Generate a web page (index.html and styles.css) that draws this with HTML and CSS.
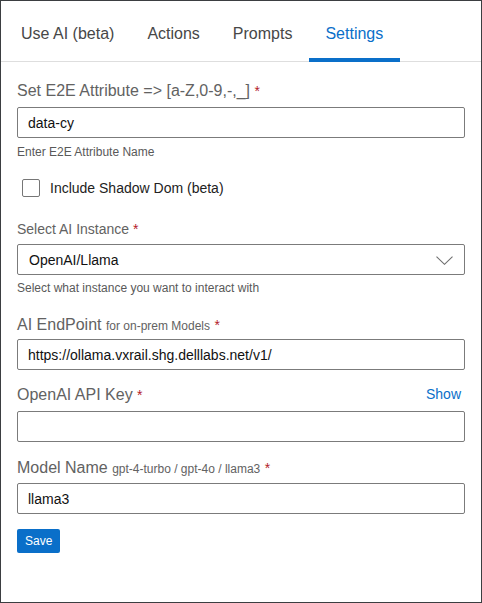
FILE: index.html
```html
<!DOCTYPE html>
<html>
<head>
<meta charset="utf-8">
<link rel="stylesheet" href="styles.css">
</head>
<body>
<div class="frame">
  <nav class="tabs">
    <div class="tab">Use AI (beta)</div>
    <div class="tab">Actions</div>
    <div class="tab">Prompts</div>
    <div class="tab active">Settings</div>
  </nav>
  <form class="content">
    <label class="label lg first">Set E2E Attribute =&gt; [a-Z,0-9,-,_] <span class="req">*</span></label>
    <input class="field" type="text" value="data-cy">
    <div class="help h1">Enter E2E Attribute Name</div>

    <div class="check-row">
      <span class="checkbox"></span>
      <span class="check-text">Include Shadow Dom (beta)</span>
    </div>

    <label class="label sm">Select AI Instance <span class="req">*</span></label>
    <div class="field select">
      <span>OpenAI/Llama</span>
      <svg width="17" height="9" viewBox="0 0 17 9"><polyline points="0.5,0.6 8.5,8.3 16.5,0.6" fill="none" stroke="#6f6f6f" stroke-width="1.1"/></svg>
    </div>
    <div class="help">Select what instance you want to interact with</div>

    <label class="label lg g2">AI EndPoint <span class="sub">for on-prem Models</span> <span class="req">*</span></label>
    <input class="field" type="text" value="https://ollama.vxrail.shg.delllabs.net/v1/">

    <div class="label lg g3 row">
      <label>OpenAI API Key <span class="req">*</span></label>
      <a class="show">Show</a>
    </div>
    <input class="field" type="password" value="">

    <label class="label lg g4">Model Name <span class="sub">gpt-4-turbo / gpt-4o / llama3</span> <span class="req">*</span></label>
    <input class="field" type="text" value="llama3">

    <div class="actions">
      <button type="button" class="btn">Save</button>
    </div>
  </form>
</div>
</body>
</html>
```

FILE: styles.css
```css
* { box-sizing: border-box; }
html, body { margin: 0; padding: 0; background: #fff; }
body { font-family: "Liberation Sans", Arial, sans-serif; }

.frame {
  width: 482px;
  height: 603px;
  border: 1px solid #3b3e41;
  background: #fff;
}

.tabs {
  display: flex;
  padding-left: 3.5px;
  border-bottom: 1px solid #dedede;
  height: 61px;
}
.tab {
  position: relative;
  padding: 22px 16.5px 0;
  font-size: 16px;
  line-height: 21px;
  color: #474747;
}
.tab.active { color: #0a6fc9; }
.tab.active::after {
  content: "";
  position: absolute;
  left: 0;
  right: 0;
  bottom: -1px;
  height: 4px;
  background: #0a6fc9;
}

.content {
  display: flex;
  flex-direction: column;
  padding: 0 16px;
}

.label {
  display: block;
  color: #626262;
  line-height: 20px;
  height: 20px;
}
.label.lg { font-size: 16px; }
.label.first { margin-top: 19px; margin-bottom: 6px; }
.label.sm { font-size: 14px; line-height: 18px; height: 18px; margin-top: 23px; margin-bottom: 6px; }
.label.g2 { margin-top: 19px; margin-bottom: 4px; }
.label.g3 { margin-top: 15px; margin-bottom: 6px; }
.label.g4 { margin-top: 16px; margin-bottom: 5px; }
.label.row { display: flex; justify-content: space-between; align-items: flex-start; }

.req { color: #b3202a; font-size: 14px; line-height: 1; }
.sub { font-size: 12px; color: #626262; line-height: 1; }

.show {
  font-size: 14px;
  line-height: 18px;
  color: #0a6fc9;
  margin-right: 4px;
  cursor: pointer;
}

.field {
  display: block;
  width: 100%;
  height: 31px;
  margin: 0;
  padding: 0 10px;
  border: 1px solid #7b7b7b;
  border-radius: 2px;
  font-family: "Liberation Sans", Arial, sans-serif;
  font-size: 14px;
  color: #111;
  background: #fff;
  outline: none;
}
.select {
  display: flex;
  align-items: center;
  justify-content: space-between;
  padding: 0 11px 0 11px;
}
.select svg { display: block; margin-top: 1px; }

.help {
  margin-top: 5px;
  font-size: 12px;
  line-height: 16px;
  color: #595959;
}
.help.h1 { margin-top: 6px; }

.check-row {
  display: flex;
  align-items: center;
  margin-top: 19px;
  padding-left: 5px;
  height: 18px;
}
.checkbox {
  width: 18px;
  height: 18px;
  border: 1px solid #767676;
  border-radius: 2px;
  background: #fff;
}
.check-text {
  margin-left: 10px;
  font-size: 14px;
  color: #222;
  line-height: 18px;
}

.actions { margin-top: 15px; display: flex; }
.btn {
  height: 24px;
  padding: 0 8px;
  border: none;
  border-radius: 2px;
  background: #0a6fc9;
  color: #fff;
  font-family: "Liberation Sans", Arial, sans-serif;
  font-size: 12px;
}
```
